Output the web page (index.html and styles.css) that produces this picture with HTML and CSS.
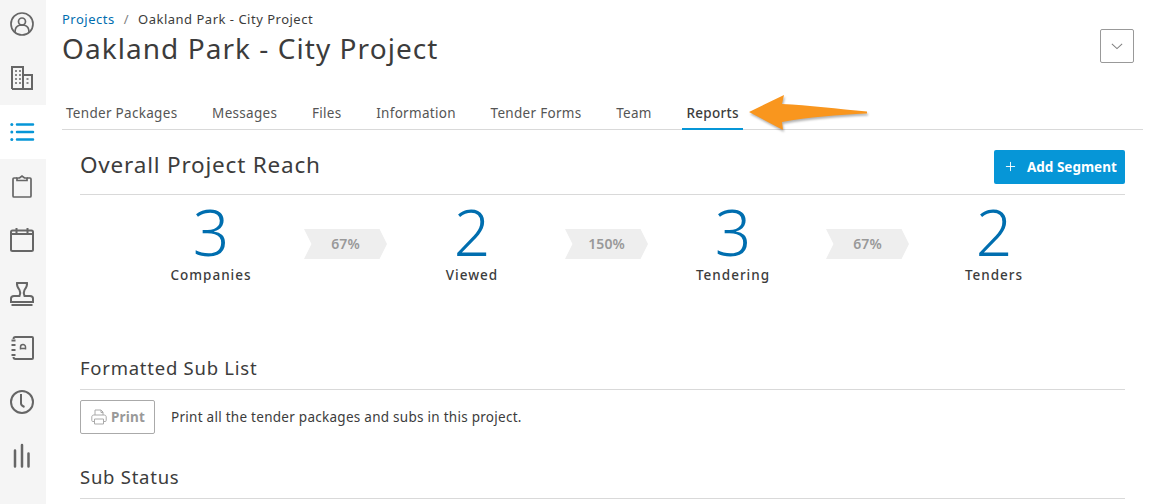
FILE: index.html
```html
<!DOCTYPE html>
<html lang="en">
<head>
<meta charset="utf-8">
<title>Oakland Park - City Project</title>
<link rel="stylesheet" href="styles.css">
</head>
<body>
<div class="app">
  <nav class="rail">
    <a class="rail-item"><svg viewBox="0 0 24 24" class="ico"><circle cx="12" cy="12" r="11"/><circle cx="12" cy="9.500" r="3.500"/><path d="M5 20c0-4 1.500-6 4.500-6.800h5c3 .8 4.500 2.800 4.500 6.800"/></svg></a>
    <a class="rail-item"><svg viewBox="0 0 24 24" class="ico bold"><path d="M2 23V1h11v22M13 9h9v14H2"/><path class="dots" d="M5 5h2M9 5h2M5 9h2M9 9h2M5 13h2M9 13h2M5 17h2M9 17h2M16.500 13h2M16.500 17h2"/></svg></a>
    <a class="rail-item active"><svg viewBox="0 0 24 24" class="ico"><path d="M7 4.500H23M7 12H23M7 19.500H23"/><circle class="bullet" cx="1.800" cy="4.500" r="1.500"/><circle class="bullet" cx="1.800" cy="12" r="1.500"/><circle class="bullet" cx="1.800" cy="19.500" r="1.500"/></svg></a>
    <a class="rail-item"><svg viewBox="0 0 24 24" class="ico"><path d="M7 4H4a1 1 0 0 0-1 1v17a1 1 0 0 0 1 1h16a1 1 0 0 0 1-1V5a1 1 0 0 0-1-1h-3"/><path d="M7 6.500V4h2.500L12 2l2.500 2H17v2.500z"/></svg></a>
    <a class="rail-item"><svg viewBox="0 0 24 24" class="ico bold"><rect x="1" y="2.500" width="22" height="20.500" rx="1.500"/><path d="M1 6h22M6.500 0v5M17.500 0v5"/></svg></a>
    <a class="rail-item"><svg viewBox="0 0 24 24" class="ico bold"><path d="M7 1h10c.5 3-1 5-2.500 7-1 2-1 4 0 6H20c2 0 3 1 3 2.500V20H1v-3.500C1 15 2 14 4 14h5.500c1-2 1-4 0-6C8 6 6.500 4 7 1zM1.500 23h21"/></svg></a>
    <a class="rail-item"><svg viewBox="0 0 24 24" class="ico bold"><path d="M3.500 3c0-1.200.8-2 2-2H22a1 1 0 0 1 1 1v20a1 1 0 0 1-1 1H5.500c-1.200 0-2-.8-2-2"/><path d="M1.500 4.500h4M1.500 9h4M1.500 14h4M1.500 19h4"/><path class="thin" d="M10.500 13.500v-2.500a2.500 2.500 0 0 1 5 0v2.500M10.500 12.500h5"/></svg></a>
    <a class="rail-item"><svg viewBox="0 0 24 24" class="ico bold"><circle cx="12" cy="12" r="11"/><path d="M11 4v9.500c0 1.500 1 2.500 3.500 3.500"/></svg></a>
    <a class="rail-item"><svg viewBox="0 0 24 24" class="ico bars"><path d="M5 6.500v16M12 1v21.500M18.500 9.500v13"/></svg></a>
  </nav>

  <main class="main">
    <header class="head">
      <div class="head-text">
        <div class="crumbs"><a class="link">Projects</a><span class="sep">/</span><span>Oakland Park - City Project</span></div>
        <h1 class="title">Oakland Park - City Project</h1>
      </div>
      <button class="menu-btn" aria-label="Menu"><svg viewBox="0 0 14 8" class="chev"><path d="M1 1l6 5.500L13 1"/></svg></button>
    </header>

    <div class="tabs">
      <a class="tab">Tender Packages</a>
      <a class="tab">Messages</a>
      <a class="tab">Files</a>
      <a class="tab">Information</a>
      <a class="tab">Tender Forms</a>
      <a class="tab">Team</a>
      <a class="tab current">Reports</a>
    </div>

    <div class="content">
      <section class="reach">
        <div class="section-head">
          <h2 class="h-large">Overall Project Reach</h2>
          <button class="primary"><svg viewBox="0 0 12 12" class="plus"><path d="M6 1v10M1 6h10"/></svg>Add Segment</button>
        </div>
        <div class="funnel">
          <div class="stat"><div class="num">3</div><div class="lbl">Companies</div></div>
          <div class="pct">67%</div>
          <div class="stat"><div class="num">2</div><div class="lbl">Viewed</div></div>
          <div class="pct">150%</div>
          <div class="stat"><div class="num">3</div><div class="lbl">Tendering</div></div>
          <div class="pct">67%</div>
          <div class="stat"><div class="num">2</div><div class="lbl">Tenders</div></div>
        </div>
      </section>

      <section class="sub">
        <h2 class="h-small">Formatted Sub List</h2>
        <div class="print-row">
          <button class="print"><svg viewBox="0 0 16 16" class="print-ico"><path d="M4 6V1h6l2 2v3M3.500 12.500H1.800a1 1 0 0 1-1-1V8c0-1.200.8-2 2-2h10.400c1.200 0 2 .8 2 2v3.500a1 1 0 0 1-1 1h-1.700M3.500 10h9v5h-9zM10 1v2.500h2"/></svg>Print</button>
          <p class="print-text">Print all the tender packages and subs in this project.</p>
        </div>
      </section>

      <section class="status">
        <h2 class="h-small">Sub Status</h2>
      </section>
    </div>
  </main>
</div>

<svg class="arrow" viewBox="0 0 120 36" aria-hidden="true">
  <path d="M1 17 L36 0 L34 9 C60 10 90 14 119 16.500 L119 18.500 C90 20 60 22 34 27 L35 35 Z"/>
</svg>
</body>
</html>
```
FILE: styles.css
```css
* { box-sizing: border-box; }
html, body { margin: 0; height: 100%; overflow: hidden; }
body {
  font-family: "Noto Sans", "Open Sans", sans-serif;
  color: #3c3c3c;
  background: #fff;
  position: relative;
}
.app { display: flex; height: 504px; }

.rail {
  width: 46px;
  flex: none;
  background: #f5f5f5;
  display: flex;
  flex-direction: column;
}
.rail-item {
  height: 54px;
  padding-right: 2px;
  display: flex;
  align-items: center;
  justify-content: center;
}
.rail-item:first-child { height: 51px; padding-bottom: 3px; }
.rail-item.active { background: #fff; }
.ico {
  width: 24px;
  height: 24px;
  fill: none;
  stroke: #666;
  stroke-width: 1.700;
  overflow: visible;
}
.ico.bold { stroke-width: 2; }
.ico .dots { stroke-width: 1.600; }
.ico .thin { stroke-width: 1.500; }
.ico.bars { stroke-width: 2.500; stroke-linecap: round; }
.active .ico { stroke: #0696d7; stroke-width: 2.500; stroke-linecap: round; }
.active .ico .bullet { fill: #0696d7; stroke: none; }

.main { flex: 1; padding: 10px 6px 0 16px; min-width: 0; }

.head { display: flex; justify-content: space-between; align-items: flex-start; padding-right: 9px; }
.crumbs { font-size: 13px; line-height: 18px; display: flex; letter-spacing: .5px; }
.link { color: #006eaf; }
.sep { margin: 0 9px; color: #808080; }
.title {
  margin: 1px 0 0;
  font-size: 28px;
  line-height: 38px;
  font-weight: 400;
  letter-spacing: 1.050px;
  color: #3c3c3c;
}
.menu-btn {
  width: 34px;
  height: 34px;
  margin-top: 19px;
  padding: 0;
  border: 1px solid #999;
  border-radius: 2px;
  background: #fff;
  display: flex;
  align-items: center;
  justify-content: center;
}
.chev { width: 12px; height: 7px; fill: none; stroke: #808080; stroke-width: 1.200; }

.tabs {
  display: flex;
  margin-top: 32px;
  height: 31px;
  border-bottom: 1px solid #d9d9d9;
}
.tab {
  padding: 4px 4px 0;
  margin-right: 26.700px;
  font-size: 13.500px;
  line-height: 20px;
  letter-spacing: .3px;
  color: #555;
  height: 31px;
}
.tab.current {
  font-weight: 500;
  color: #3c3c3c;
  border-bottom: 2px solid #0696d7;
  margin-right: 0;
}

.content { padding: 0 18px; }

.section-head {
  display: flex;
  justify-content: space-between;
  align-items: center;
  height: 65px;
  padding-top: 6px;
  border-bottom: 1px solid #d9d9d9;
}
.h-large {
  margin: 0;
  font-size: 22.500px;
  line-height: 30px;
  font-weight: 400;
  letter-spacing: .8px;
  color: #3c3c3c;
}
.primary {
  width: 131px;
  height: 34px;
  margin-top: 3px;
  border: 0;
  border-radius: 2px;
  background: #0696d7;
  color: #fff;
  font: 700 13.500px/20px "Noto Sans", sans-serif;
  display: flex;
  align-items: center;
  padding: 0 0 0 11px;
}
.plus { width: 11px; height: 11px; margin-right: 11px; stroke: #fff; stroke-width: 1; fill: none; }

.funnel {
  display: flex;
  justify-content: center;
  align-items: flex-start;
  height: 160px;
  padding-top: 2px;
}
.stat { width: 178px; text-align: center; flex: none; }
.num {
  font-size: 64px;
  line-height: 70px;
  color: #006eaf;
  font-weight: 300;
}
.lbl {
  font-size: 13.500px;
  line-height: 20px;
  margin-top: -2px;
  font-weight: 500;
  letter-spacing: 1px;
  color: #3c3c3c;
}
.pct {
  flex: none;
  width: 83px;
  height: 30px;
  margin: 32px -4px 0 4px;
  background: #eee;
  clip-path: polygon(0 0, 91% 0, 100% 50%, 91% 100%, 0 100%, 9% 50%);
  text-align: center;
  line-height: 30px;
  font-size: 14px;
  font-weight: 600;
  color: #999;
}

.h-small {
  margin: 0;
  font-size: 18.500px;
  line-height: 26px;
  font-weight: 400;
  letter-spacing: .75px;
  color: #3c3c3c;
  padding-bottom: 8px;
  border-bottom: 1px solid #d9d9d9;
}
.print-row { display: flex; align-items: center; margin-top: 10px; height: 34px; }
.print {
  width: 75px;
  height: 34px;
  padding: 0 0 0 10px;
  border: 1px solid #aaa;
  border-radius: 2px;
  background: #fff;
  color: #999;
  font: 700 13.500px/20px "Noto Sans", sans-serif;
  letter-spacing: .2px;
  display: flex;
  align-items: center;
}
.print-ico { width: 16px; height: 16px; margin-right: 4px; fill: none; stroke: #aaa; stroke-width: 1; }
.print-text { margin: 0 0 0 16px; font-size: 13.500px; line-height: 20px; letter-spacing: .27px; color: #3c3c3c; }

.status { margin-top: 30px; }

.arrow {
  position: absolute;
  left: 748px;
  top: 95px;
  width: 120px;
  height: 36px;
  fill: #f9961e;
  filter: drop-shadow(1px 2px 1px rgba(0,0,0,.3));
}
```
